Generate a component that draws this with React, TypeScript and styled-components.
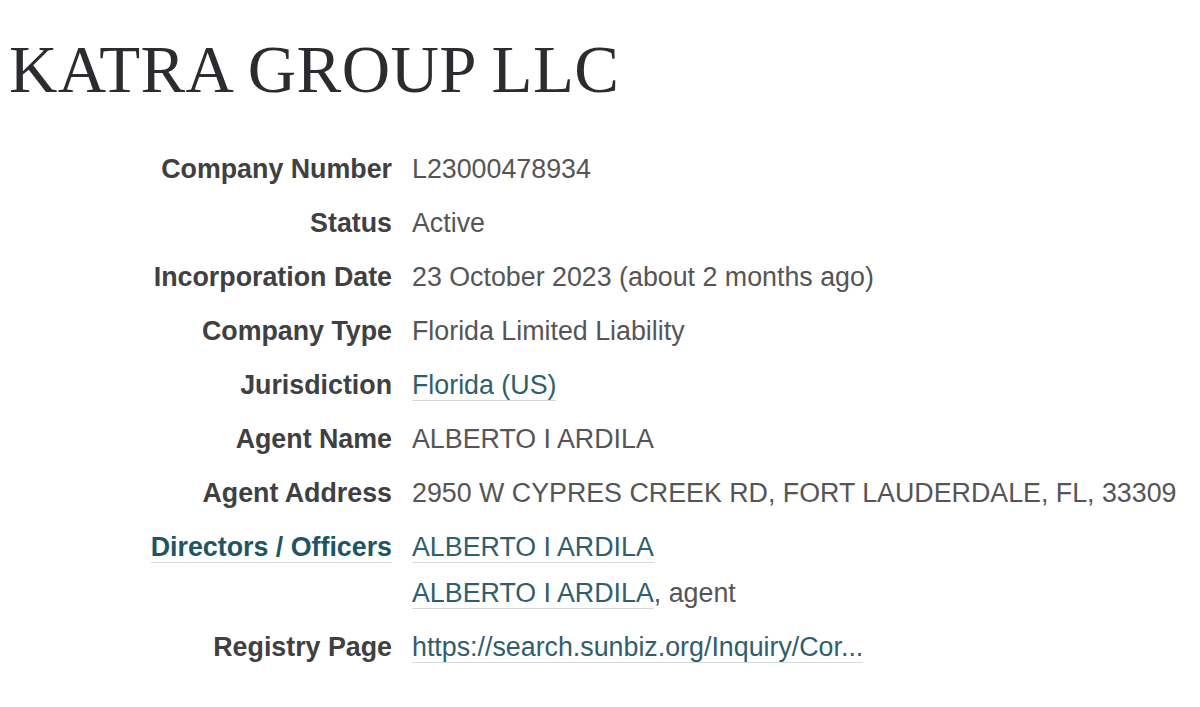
import React from "react";
import styled, { createGlobalStyle } from "styled-components";

const Global = createGlobalStyle`
  html, body { margin: 0; padding: 0; background: #ffffff; }
  body { padding: 0 8px; font-family: "Liberation Sans", Arial, sans-serif; }
`;

const Page = styled.main`
  display: flex;
  flex-direction: column;
`;

const Title = styled.h1`
  margin: 33px 0 0 1px;
  font-family: "Liberation Serif", "Times New Roman", serif;
  font-weight: 400;
  font-size: 67px;
  letter-spacing: 0.4px;
  line-height: 72px;
  color: #2d2b2f;
`;

const Details = styled.dl`
  margin: 41px 0 0 0;
  display: grid;
  grid-template-columns: 384px auto;
  column-gap: 20px;
  row-gap: 8px;
  font-size: 26.8px;
  line-height: 46px;
`;

const Term = styled.dt`
  margin: 0;
  text-align: right;
  font-weight: 700;
  color: #404042;
`;

const Value = styled.dd`
  margin: 0;
  color: #555557;
  white-space: nowrap;
`;

const Line = styled.div``;

const Link = styled.a<{ $strong?: boolean }>`
  color: ${(p) => (p.$strong ? "#1e5562" : "#2f5e6d")};
  text-decoration: none;
  border-bottom: 1px solid #d3dbde;
`;

type Row = { label: React.ReactNode; value: React.ReactNode };

const rows: Row[] = [
  { label: "Company Number", value: "L23000478934" },
  { label: "Status", value: "Active" },
  { label: "Incorporation Date", value: "23 October 2023 (about 2 months ago)" },
  { label: "Company Type", value: "Florida Limited Liability" },
  { label: "Jurisdiction", value: <Link href="#">Florida (US)</Link> },
  { label: "Agent Name", value: "ALBERTO I ARDILA" },
  { label: "Agent Address", value: "2950 W CYPRES CREEK RD, FORT LAUDERDALE, FL, 33309" },
  {
    label: (
      <Link href="#" $strong>
        Directors / Officers
      </Link>
    ),
    value: (
      <>
        <Line>
          <Link href="#">ALBERTO I ARDILA</Link>
        </Line>
        <Line>
          <Link href="#">ALBERTO I ARDILA</Link>, agent
        </Line>
      </>
    ),
  },
  {
    label: "Registry Page",
    value: <Link href="#">https://search.sunbiz.org/Inquiry/Cor...</Link>,
  },
];

export default function App() {
  return (
    <Page>
      <Global />
      <Title>KATRA GROUP LLC</Title>
      <Details>
        {rows.map((r, i) => (
          <React.Fragment key={i}>
            <Term>{r.label}</Term>
            <Value>{r.value}</Value>
          </React.Fragment>
        ))}
      </Details>
    </Page>
  );
}
